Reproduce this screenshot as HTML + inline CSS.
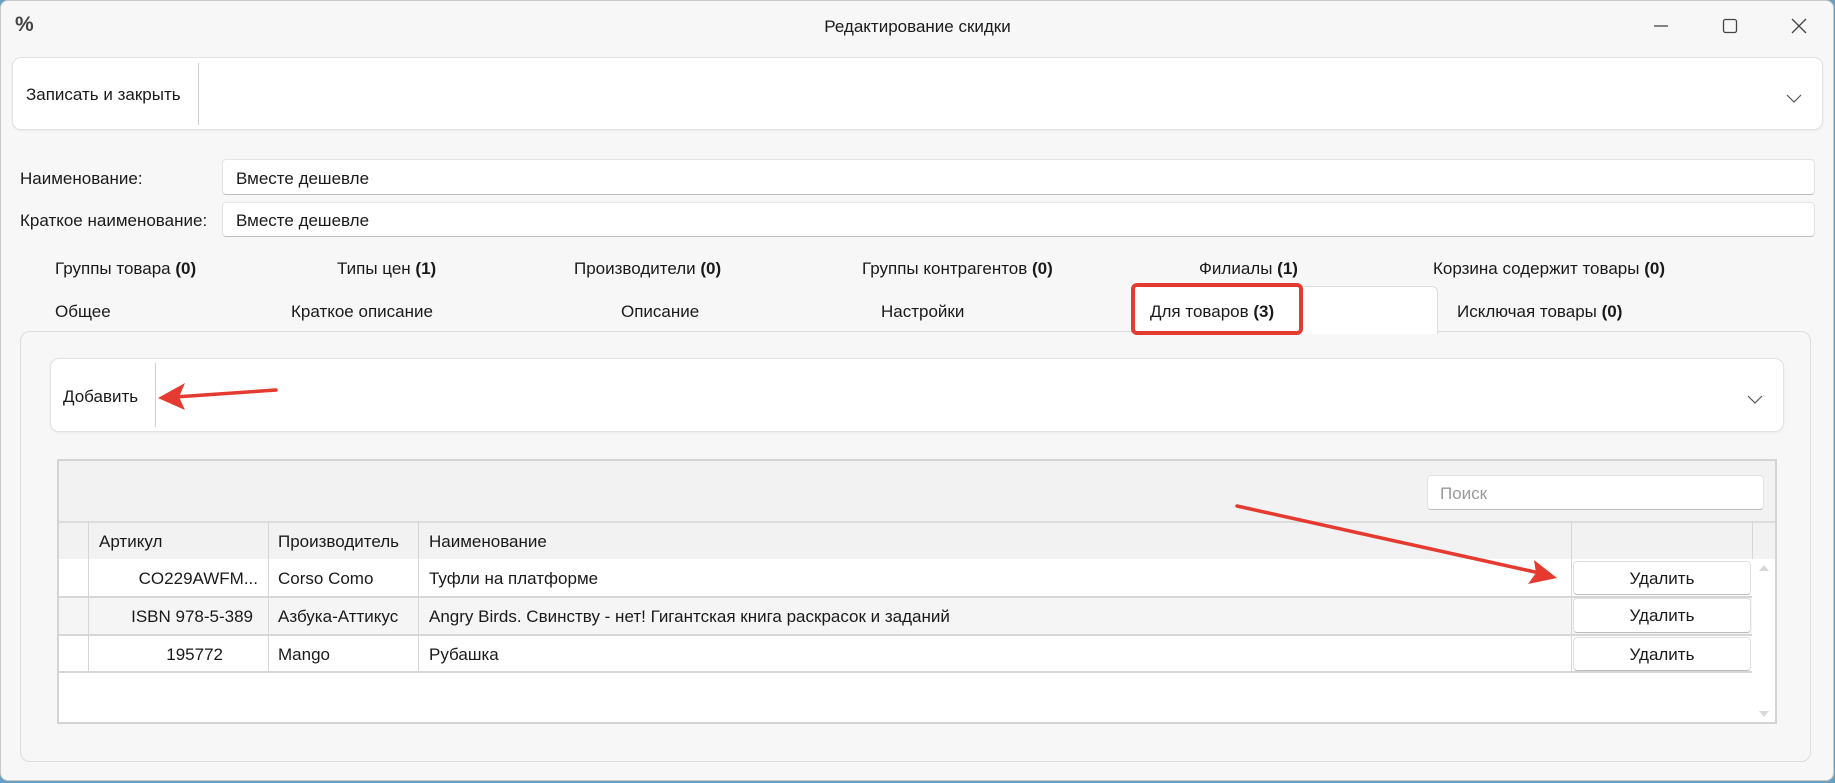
<!DOCTYPE html>
<html><head><meta charset="utf-8"><style>
*{box-sizing:border-box;margin:0;padding:0}
body{width:1835px;height:783px;background:#6a9fc0;font-family:"Liberation Sans","DejaVu Sans",sans-serif;font-size:17px;color:#1a1a1a;position:relative;overflow:hidden}
.a{position:absolute}
.win{left:0;top:0;width:1834px;height:781px;background:#f7f7f7;border-radius:8px;border:1px solid #c9c9c9}
.card{background:#fff;border:1px solid #e2e2e2;border-radius:9px;box-shadow:0 1px 2px rgba(0,0,0,.06)}
.inp{background:#fff;border:1px solid #e3e3e3;border-bottom:1px solid #bdbdbd;border-radius:4px}
.t{white-space:nowrap;line-height:20px;margin-top:2px}
.sep{background:#cfcfcf;width:1px}
.btn{background:#fff;border:1px solid #e0e0e0;border-bottom:1px solid #bcbcbc;border-radius:4px;text-align:center;line-height:34px}
</style></head><body>
<div class="a win"></div>
<div class="a t" style="left:15px;top:13px;font-size:21px;font-weight:bold;color:#444">%</div>
<div class="a t" style="left:0;width:1835px;text-align:center;top:15px">Редактирование скидки</div>
<svg class="a" style="left:1600px;top:0" width="235" height="50">
<line x1="54" y1="26" x2="68" y2="26" stroke="#444" stroke-width="1.3"/>
<rect x="123.5" y="19.5" width="13" height="13" rx="2" fill="none" stroke="#444" stroke-width="1.3"/>
<path d="M192 19 L206 33 M206 19 L192 33" stroke="#444" stroke-width="1.3"/>
</svg>
<div class="a card" style="left:12px;top:57px;width:1811px;height:73px"></div>
<div class="a t" style="left:26px;top:83px">Записать и закрыть</div>
<div class="a sep" style="left:198px;top:63px;height:62px"></div>
<svg class="a" style="left:1785px;top:92px" width="18" height="12"><path d="M2 3 L9 10 L16 3" fill="none" stroke="#555" stroke-width="1.2"/></svg>

<div class="a t" style="left:20px;top:167px">Наименование:</div>
<div class="a inp" style="left:222px;top:159px;width:1593px;height:36px"></div>
<div class="a t" style="left:236px;top:167px">Вместе дешевле</div>
<div class="a t" style="left:20px;top:209px">Краткое наименование:</div>
<div class="a inp" style="left:222px;top:202px;width:1593px;height:35px"></div>
<div class="a t" style="left:236px;top:209px">Вместе дешевле</div>

<div class="a t" style="left:55px;top:257px">Группы товара <b>(0)</b></div>
<div class="a t" style="left:337px;top:257px">Типы цен <b>(1)</b></div>
<div class="a t" style="left:574px;top:257px">Производители <b>(0)</b></div>
<div class="a t" style="left:862px;top:257px">Группы контрагентов <b>(0)</b></div>
<div class="a t" style="left:1199px;top:257px">Филиалы <b>(1)</b></div>
<div class="a t" style="left:1433px;top:257px">Корзина содержит товары <b>(0)</b></div>

<div class="a" style="left:20px;top:331px;width:1791px;height:431px;border:1px solid #dcdcdc;border-radius:10px;background:#f7f7f7"></div>
<div class="a" style="left:1131px;top:286px;width:307px;height:48px;background:#fff;border:1px solid #dedede;border-bottom:none;border-radius:6px 6px 0 0"></div>
<div class="a t" style="left:55px;top:300px">Общее</div>
<div class="a t" style="left:291px;top:300px">Краткое описание</div>
<div class="a t" style="left:621px;top:300px">Описание</div>
<div class="a t" style="left:881px;top:300px">Настройки</div>
<div class="a t" style="left:1150px;top:300px">Для товаров <b>(3)</b></div>
<div class="a t" style="left:1457px;top:300px">Исключая товары <b>(0)</b></div>
<div class="a" style="left:1131px;top:283px;width:172px;height:52px;border:4px solid #e53a30;border-radius:6px"></div>

<div class="a card" style="left:50px;top:358px;width:1734px;height:74px"></div>
<div class="a t" style="left:63px;top:385px">Добавить</div>
<div class="a sep" style="left:155px;top:363px;height:64px"></div>
<svg class="a" style="left:1746px;top:393px" width="18" height="12"><path d="M2 3 L9 10 L16 3" fill="none" stroke="#555" stroke-width="1.2"/></svg>

<div class="a" style="left:57px;top:459px;width:1720px;height:265px;border:2px solid #d4d4d4;background:#fff"></div>
<div class="a" style="left:59px;top:461px;width:1716px;height:60px;background:#f2f2f2"></div>
<div class="a inp" style="left:1427px;top:475px;width:337px;height:35px"></div>
<div class="a t" style="left:1440px;top:482px;color:#9a9a9a">Поиск</div>
<div class="a" style="left:59px;top:521px;width:1716px;height:38px;background:#f2f2f2;border-top:2px solid #dcdcdc"></div>
<div class="a t" style="left:99px;top:530px">Артикул</div>
<div class="a t" style="left:278px;top:530px">Производитель</div>
<div class="a t" style="left:429px;top:530px">Наименование</div>
<div class="a" style="left:59px;top:597px;width:1693px;height:38px;background:#f5f5f5"></div>
<div class="a" style="left:59px;top:596px;width:1693px;height:2px;background:#d6d6d6"></div>
<div class="a" style="left:59px;top:634px;width:1693px;height:2px;background:#d6d6d6"></div>
<div class="a" style="left:59px;top:671px;width:1693px;height:2px;background:#d6d6d6"></div>
<div class="a" style="left:88px;top:521px;width:1px;height:151px;background:#d6d6d6"></div>
<div class="a" style="left:268px;top:521px;width:1px;height:151px;background:#d6d6d6"></div>
<div class="a" style="left:418px;top:521px;width:1px;height:151px;background:#d6d6d6"></div>
<div class="a" style="left:1571px;top:521px;width:1px;height:151px;background:#d6d6d6"></div>
<div class="a" style="left:1752px;top:521px;width:1px;height:38px;background:#d6d6d6"></div>
<div class="a t" style="left:88px;width:170px;text-align:right;top:567px">CO229AWFM...</div>
<div class="a t" style="left:278px;top:567px">Corso Como</div>
<div class="a t" style="left:429px;top:567px">Туфли на платформе</div>
<div class="a t" style="left:88px;width:165px;text-align:right;top:605px">ISBN 978-5-389</div>
<div class="a t" style="left:278px;top:605px">Азбука-Аттикус</div>
<div class="a t" style="left:429px;top:605px">Angry Birds. Свинству - нет! Гигантская книга раскрасок и заданий</div>
<div class="a t" style="left:88px;width:135px;text-align:right;top:643px">195772</div>
<div class="a t" style="left:278px;top:643px">Mango</div>
<div class="a t" style="left:429px;top:643px">Рубашка</div>
<div class="a btn" style="left:1573px;top:561px;width:178px;height:34px">Удалить</div>
<div class="a btn" style="left:1573px;top:598px;width:178px;height:35px">Удалить</div>
<div class="a btn" style="left:1573px;top:637px;width:178px;height:34px">Удалить</div>
<svg class="a" style="left:1756px;top:561px" width="16" height="160"><path d="M3 10 L8 4 L13 10Z M3 150 L8 156 L13 150Z" fill="#d8d8d8"/></svg>

<svg class="a" style="left:0;top:0" width="1835" height="783">
<line x1="276" y1="390" x2="175" y2="397" stroke="#e53a30" stroke-width="3.5" stroke-linecap="round"/>
<path d="M158 398 L185 383 L179 397 L185 410Z" fill="#e53a30"/>
<line x1="1237" y1="506" x2="1535" y2="572" stroke="#e53a30" stroke-width="3.5" stroke-linecap="round"/>
<path d="M1557 578 L1534 560 L1536 573 L1528 584Z" fill="#e53a30"/>
</svg>
</body></html>
